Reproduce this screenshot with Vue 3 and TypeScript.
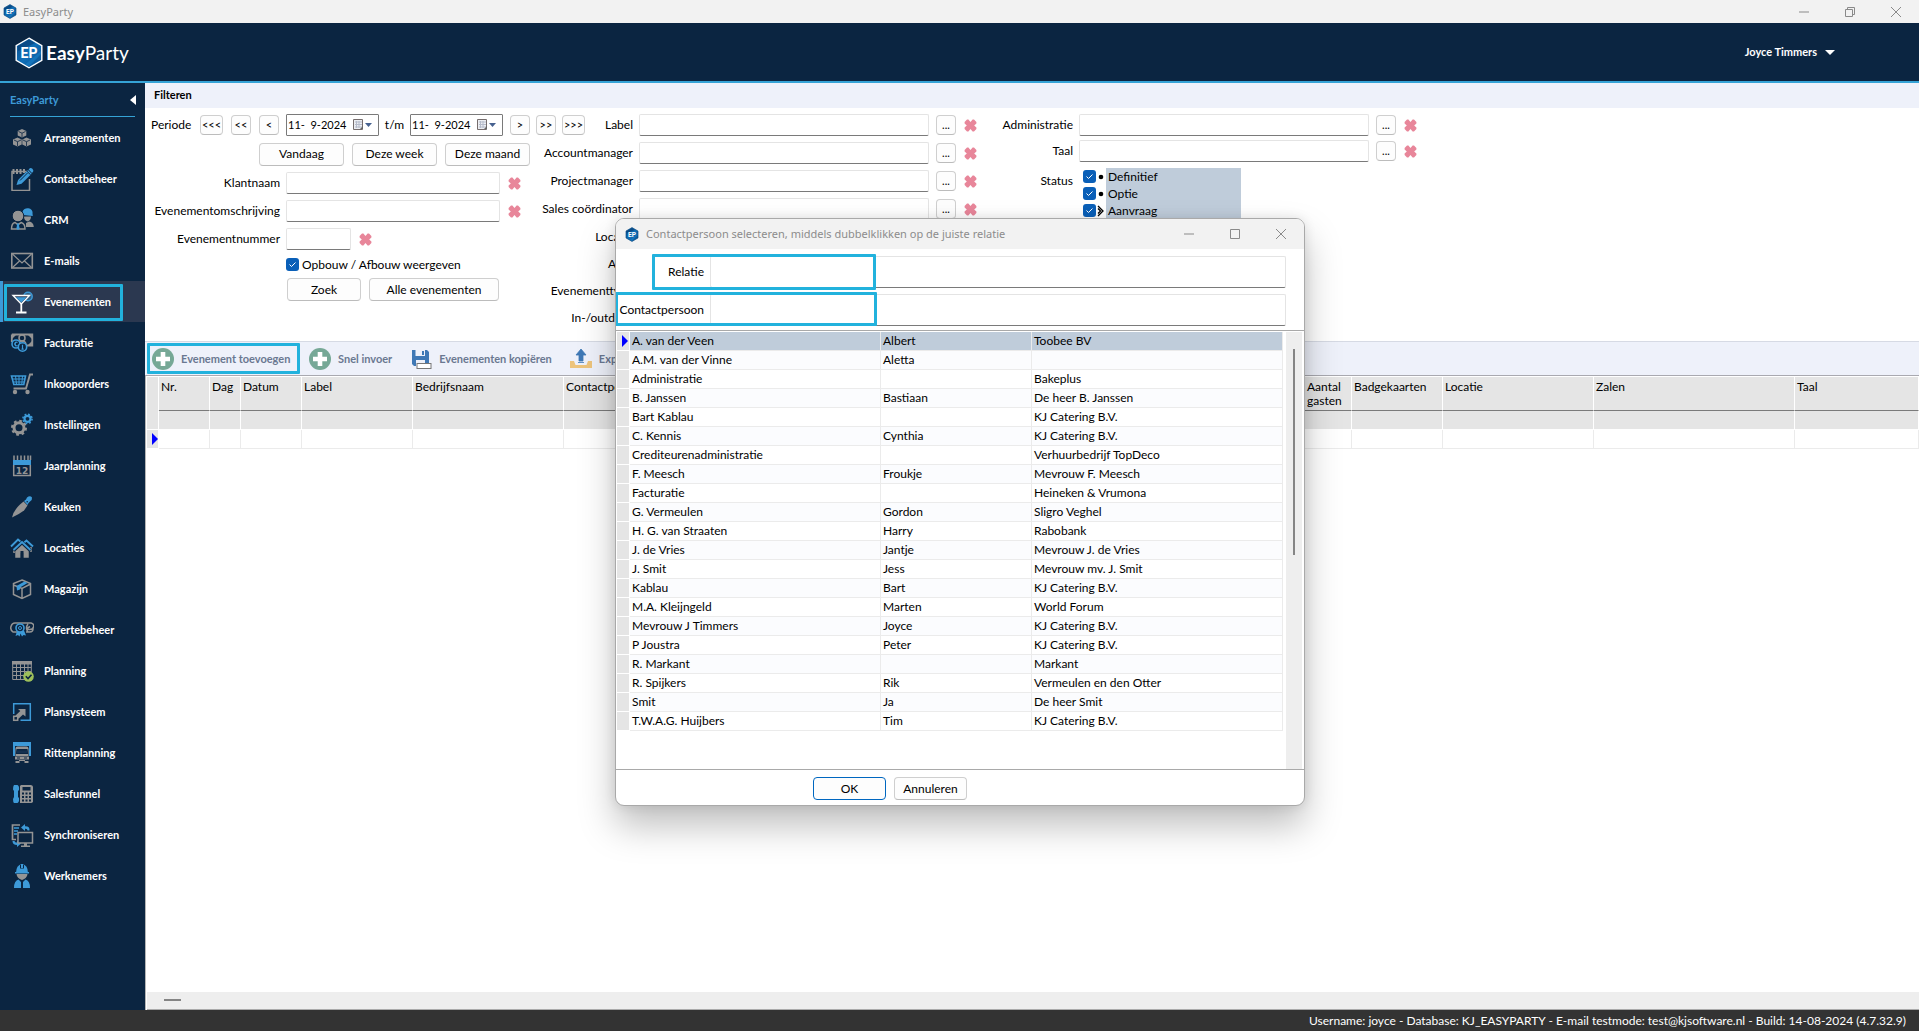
<script setup lang="ts">
import { ref } from 'vue'

interface NavItem { id: string; label: string }
interface Contact { name: string; first: string; company: string }
interface Column { label: string; width?: number }

const nav: NavItem[] = [
  { id: 'cubes', label: 'Arrangementen' },
  { id: 'notes', label: 'Contactbeheer' },
  { id: 'people', label: 'CRM' },
  { id: 'mail', label: 'E-mails' },
  { id: 'glass', label: 'Evenementen' },
  { id: 'money', label: 'Facturatie' },
  { id: 'cart', label: 'Inkooporders' },
  { id: 'gears', label: 'Instellingen' },
  { id: 'year', label: 'Jaarplanning' },
  { id: 'knife', label: 'Keuken' },
  { id: 'houses', label: 'Locaties' },
  { id: 'box', label: 'Magazijn' },
  { id: 'offer', label: 'Offertebeheer' },
  { id: 'plan', label: 'Planning' },
  { id: 'resize', label: 'Plansysteem' },
  { id: 'truck', label: 'Rittenplanning' },
  { id: 'phone', label: 'Salesfunnel' },
  { id: 'sync', label: 'Synchroniseren' },
  { id: 'worker', label: 'Werknemers' },
]
const active = ref('glass')

const before = ['<<<', '<<', '<']
const after = ['>', '>>', '>>>']
const lookups = ['Label', 'Accountmanager', 'Projectmanager', 'Sales coördinator']
const otherLabels = ['Locatie', 'Aard', 'Evenementtype', 'In-/outdoor']
const rightLookups = ['Administratie', 'Taal']
const statuses = ['Definitief', 'Optie', 'Aanvraag']

const columns: Column[] = [
  { label: 'Nr.', width: 51 },
  { label: 'Dag', width: 31 },
  { label: 'Datum', width: 61 },
  { label: 'Label', width: 111 },
  { label: 'Bedrijfsnaam', width: 151 },
  { label: 'Contactpersoon', width: 151 },
  { label: '', width: 200 },
  { label: '', width: 200 },
  { label: '', width: 190 },
  { label: 'Aantal gasten', width: 47 },
  { label: 'Badgekaarten', width: 91 },
  { label: 'Locatie', width: 151 },
  { label: 'Zalen', width: 201 },
  { label: 'Taal' },
]

const contacts: Contact[] = [
  { name: 'A. van der Veen', first: 'Albert', company: 'Toobee BV' },
  { name: 'A.M. van der Vinne', first: 'Aletta', company: '' },
  { name: 'Administratie', first: '', company: 'Bakeplus' },
  { name: 'B. Janssen', first: 'Bastiaan', company: 'De heer B. Janssen' },
  { name: 'Bart Kablau', first: '', company: 'KJ Catering B.V.' },
  { name: 'C. Kennis', first: 'Cynthia', company: 'KJ Catering B.V.' },
  { name: 'Crediteurenadministratie', first: '', company: 'Verhuurbedrijf TopDeco' },
  { name: 'F. Meesch', first: 'Froukje', company: 'Mevrouw F. Meesch' },
  { name: 'Facturatie', first: '', company: 'Heineken & Vrumona' },
  { name: 'G. Vermeulen', first: 'Gordon', company: 'Sligro Veghel' },
  { name: 'H. G. van Straaten', first: 'Harry', company: 'Rabobank' },
  { name: 'J. de Vries', first: 'Jantje', company: 'Mevrouw J. de Vries' },
  { name: 'J. Smit', first: 'Jess', company: 'Mevrouw mv. J. Smit' },
  { name: 'Kablau', first: 'Bart', company: 'KJ Catering B.V.' },
  { name: 'M.A. Kleijngeld', first: 'Marten', company: 'World Forum' },
  { name: 'Mevrouw J Timmers', first: 'Joyce', company: 'KJ Catering B.V.' },
  { name: 'P Joustra', first: 'Peter', company: 'KJ Catering B.V.' },
  { name: 'R. Markant', first: '', company: 'Markant' },
  { name: 'R. Spijkers', first: 'Rik', company: 'Vermeulen en den Otter' },
  { name: 'Smit', first: 'Ja', company: 'De heer Smit' },
  { name: 'T.W.A.G. Huijbers', first: 'Tim', company: 'KJ Catering B.V.' },
]
const selected = ref(0)
</script>

<template>
  <div class="app">
    <svg class="defs" aria-hidden="true">
      <defs>
        <linearGradient id="hexfill" x1="0" y1="0" x2="1" y2="1">
          <stop offset="0" stop-color="#0a4a86" />
          <stop offset="0.5" stop-color="#0f6fb8" />
          <stop offset="1" stop-color="#0b4f8c" />
        </linearGradient>
        <symbol id="hex" viewBox="0 0 28 32">
          <path d="M14 1.2 26.8 8.6V23.4L14 30.8 1.2 23.4V8.6Z" fill="url(#hexfill)" stroke="currentColor" stroke-width="1.4" />
          <path d="M3 9 14 2.6 20 6 3 14Z" fill="#083e74" opacity=".6" />
          <path d="M26 17 14 29.6 10 27.4 26 14Z" fill="#1c86d0" opacity=".5" />
          <text x="14" y="21" text-anchor="middle" font-family="Roboto, sans-serif" font-weight="700" font-size="14" fill="#fff">EP</text>
        </symbol>
        <symbol id="cross" viewBox="0 0 13 13">
          <path d="M3 0.6h1.4L6.5 3 8.6.6H10L12.4 3v1.4L10.2 6.5l2.2 2.1V10L10 12.4H8.6L6.5 10l-2.1 2.4H3L.6 10V8.6L2.8 6.5.6 4.4V3Z" fill="#e8869a" />
        </symbol>
        <symbol id="plus" viewBox="0 0 22 22">
          <circle cx="11" cy="11" r="11" fill="#76a896" />
          <path d="M8.7 4h4.6v4.700h4.700v4.600h-4.700v4.700H8.700v-4.700H4V8.700h4.700Z" fill="#fff" />
        </symbol>
        <symbol id="i-cubes" viewBox="0 0 24 24">
          <g fill="#949494"><path d="m12 3 4.300 2v4.500l-4.300 2-4.300-2V5Z" /><path d="m7.500 11.500 4.200 2v5l-4.200 2-4.500-2v-5Z" /><path d="m16.500 11.500 4.500 2v5l-4.500 2-4.200-2v-5Z" /></g>
          <path d="m8.500 5.500 3.500 1.700 3.500-1.700M12 7.200V11M4 14l3.500 1.700L11 14M7.500 15.700V20M13 14l3.500 1.700L20 14M16.500 15.700V20" fill="none" stroke="#0b2541" stroke-width=".8" />
        </symbol>
        <symbol id="i-notes" viewBox="0 0 24 24">
          <path d="M17 4.500H2v19h17.500V12" fill="none" stroke="#949494" stroke-width="1.500" />
          <path d="M3.500 2v5M7 2v5M10.500 2v5M14 2v4" stroke="#949494" stroke-width="2" />
          <path d="m6.500 18 1.600-5L18 3l3.700 3.700L11.500 16.700Z" fill="#3d9ad8" /><path d="m18.600 2.400 1.200-1.200q1.200-.8 2.600.6t.8 2.800L22 5.900Z" fill="#3d9ad8" />
          <path d="m10 13.500 7.500-7.500M16.500 3.800l4 4" stroke="#0b2541" />
        </symbol>
        <symbol id="i-people" viewBox="0 0 24 24">
          <path d="M12.500 4a5 4.500 0 0 1 10 1.500l.3 2.500-9.800-1Z" fill="#3d9ad8" /><path d="M14 8.500h7q0 4-3.500 5-3.500-1-3.500-5ZM16 15l3-1.500q4.500.5 4.800 5.500H16Z" fill="#949494" />
          <circle cx="8" cy="8" r="5.800" fill="#949494" stroke="#0b2541" />
          <path d="M5 14.500q-3.500.8-3.500 6.500H15q0-5.500-3.800-6.500L8 16.500Z" fill="#0b2541" stroke="#949494" stroke-width="1.500" />
          <path d="m8 15 1.500 1.500L9 17.500l.7 3L8 22l-1.700-1.500.7-3-.5-1Z" fill="#3d9ad8" />
        </symbol>
        <symbol id="i-mail" viewBox="0 0 24 24">
          <rect x="1.800" y="4.500" width="20.500" height="14.500" fill="none" stroke="#949494" stroke-width="1.600" />
          <path d="M2.500 5 12 14l9.500-9M2.500 18.500l7-6.500M21.500 18.500l-7-6.500" fill="none" stroke="#949494" stroke-width="1.200" />
        </symbol>
        <symbol id="i-glass" viewBox="0 0 24 24">
          <circle cx="18" cy="6.500" r="4" fill="#3d9ad8" opacity=".4" /><circle cx="18" cy="6.500" r="4.200" fill="none" stroke="#3d9ad8" stroke-width="1.500" />
          <path d="M3 5.500h16.500L11.300 14Z" fill="#2b3850" stroke="#fff" stroke-width="1.400" /><path d="M5.800 7.200h11L11.300 12.600Z" fill="#3d9ad8" />
          <path d="M11.300 13.500V22M6 22.500h10.500" stroke="#fff" stroke-width="1.800" />
        </symbol>
        <symbol id="i-money" viewBox="0 0 24 24">
          <path d="M1.800 3.500h20.500v11H16M1.800 3.500V11" fill="none" stroke="#949494" stroke-width="1.800" /><path d="M2 4h4L2 8ZM18 4h4v4ZM22 14h-4l4-4Z" fill="#949494" />
          <circle cx="12" cy="7" r="3" fill="none" stroke="#949494" stroke-width="1.500" /><path d="M8 14q0-4 4-4t4 4" fill="none" stroke="#949494" stroke-width="1.500" />
          <circle cx="6" cy="13" r="4" fill="#0b2541" stroke="#3d9ad8" stroke-width="1.600" /><circle cx="12.500" cy="16" r="4.200" fill="#0b2541" stroke="#3d9ad8" stroke-width="1.600" />
          <path d="M7.500 11.500q-2.500-1-2.500 1.500t2.500 1.500M4 13h2M12.500 13.800v4.400M11.500 18.200h2.200" stroke="#3d9ad8" stroke-width="1.200" fill="none" />
        </symbol>
        <symbol id="i-cart" viewBox="0 0 24 24">
          <path d="M1.500 4h14l-1.700 8.500H3.800Z" fill="none" stroke="#3d9ad8" stroke-width="1.600" /><path d="M5.500 4l1 8M9 4v8M12.500 4l-.7 8M2 7h13M3 10h11.500" stroke="#3d9ad8" />
          <path d="M23 2.500h-3L16 16.500H3.500" fill="none" stroke="#949494" stroke-width="1.900" /><circle cx="5" cy="20" r="2.200" fill="#949494" /><circle cx="17.500" cy="20" r="2.200" fill="#949494" />
        </symbol>
        <symbol id="i-gears" viewBox="0 0 24 24">
          <circle cx="9" cy="14.800" r="5" fill="none" stroke="#949494" stroke-width="3" /><circle cx="9" cy="14.800" r="7" fill="none" stroke="#949494" stroke-width="2" stroke-dasharray="2.750 2.750" />
          <circle cx="17.500" cy="5.800" r="3" fill="none" stroke="#3d9ad8" stroke-width="2.200" /><circle cx="17.500" cy="5.800" r="4.600" fill="none" stroke="#3d9ad8" stroke-width="1.500" stroke-dasharray="1.810 1.810" />
        </symbol>
        <symbol id="i-year" viewBox="0 0 24 24">
          <path d="M4 1.500V6M7.500 1.500V6M11 1.500V6M14.500 1.500V6M18 1.500V6M20.500 1.500V6" stroke="#949494" stroke-width="1.500" />
          <path d="M3 6h18v5H3Z" fill="#3d9ad8" /><path d="M3.700 11v10.500h16.600V11" fill="none" stroke="#949494" stroke-width="1.500" />
          <text x="12" y="19.700" text-anchor="middle" font-family="'DejaVu Sans', sans-serif" font-size="9" font-weight="700" fill="#949494">12</text>
        </symbol>
        <symbol id="i-knife" viewBox="0 0 24 24">
          <path d="m13.500 6.500 4 4-3.500 5Q9.500 19 2 22.500q1.500-7 8-13Z" fill="#949494" /><path d="m14 6 2-1.500 1-2q3-2.500 5 0 .5 2-2 4l-1.500 1.500-1 2Z" fill="#3d9ad8" /><circle cx="17.200" cy="6.800" r=".8" fill="#0b2541" />
        </symbol>
        <symbol id="i-houses" viewBox="0 0 24 24">
          <path d="M12 6 4 13v4M21 11v5M6 14v7h4v-5h4v5h4v-7l-6-5Z" fill="#949494" stroke="#949494" stroke-width="1.500" /><path d="M10.500 15h3v7h-3Z" fill="#0b2541" />
          <path d="m1 10.500 7-7 3.500 3M23 10.500l-6.500-6-3.500 3" fill="none" stroke="#3d9ad8" stroke-width="1.900" /><path d="m3.500 14.500 8.500-8 8.500 8" fill="none" stroke="#0b2541" stroke-width="3.500" /><path d="m3.500 14 8.500-8 8.500 8" fill="none" stroke="#3d9ad8" stroke-width="1.900" />
        </symbol>
        <symbol id="i-box" viewBox="0 0 24 24">
          <path d="m12 3 8.500 3.500v11L12 21.500l-8.500-4v-11ZM3.500 8 12 11.500 20.500 7M12 11.500v10" fill="none" stroke="#949494" stroke-width="1.500" />
          <path d="m6.500 9 8-4.500 3 1.500-7.500 4.500v2L7 13.500Z" fill="#3d9ad8" />
        </symbol>
        <symbol id="i-offer" viewBox="0 0 24 24">
          <path d="M7 14H3q-3-2-2-5.500T5 5h16q3.500 1 2.500 4T19 11.500t1-3M16 14h3.500q4 0 3.500-4M18 6q-3 4 0 8" fill="none" stroke="#949494" stroke-width="1.500" />
          <path d="m7 13-1.500 5 2.500-1 1.500 1.500 1-3 1.500 3 1.500-1.500 2.500.5-2-5Z" fill="#3d9ad8" /><circle cx="10" cy="10" r="4" fill="#0b2541" stroke="#3d9ad8" stroke-width="1.600" /><circle cx="10" cy="10" r="1.500" fill="none" stroke="#3d9ad8" />
        </symbol>
        <symbol id="i-plan" viewBox="0 0 24 24">
          <path d="M2.700 3.500h18.600v17H2.700ZM6.500 4v17M10.500 4v17M14.500 4v17M18 4v17M3 8.500h18M3 12.500h18M3 16.500h18" fill="none" stroke="#949494" stroke-width="1" /><path d="M2 2h20v3.500H2Z" fill="#949494" />
          <circle cx="18.500" cy="17.500" r="5.300" fill="#9dc05a" /><path d="m15.800 17.300 2.200 2.200 3.500-3.800" fill="none" stroke="#0b2541" stroke-width="1.600" />
        </symbol>
        <symbol id="i-resize" viewBox="0 0 24 24">
          <path d="M3.700 14V3.700h16.600v16.600H10.500" fill="none" stroke="#3d9ad8" stroke-width="1.500" /><rect x="3.700" y="16.300" width="4" height="4" fill="none" stroke="#949494" stroke-width="1.500" />
          <path d="M8 9h7.500v7.500L13 14.500l-4.500 4.300-3-3.200L10.300 11Z" fill="#949494" />
        </symbol>
        <symbol id="i-truck" viewBox="0 0 24 24">
          <path d="M3 1h18v14h-2V5H5v10H3Z" fill="#3d9ad8" /><path d="M7.500 5.500h9q2 0 2 2V15h-13V7.500q0-2 2-2Z" fill="#949494" /><path d="M6.500 8h11l.7 5H5.800Z" fill="#0b2541" /><path d="M6.500 9.500h11V12h-11Z" fill="#14304f" />
          <path d="M5 15.500h14v3H5ZM5.500 20h4v2h-4ZM14.500 20h4v2h-4ZM9 19h6v1H9Z" fill="#949494" /><path d="M7 17h3M14 17h3" stroke="#0b2541" />
        </symbol>
        <symbol id="i-phone" viewBox="0 0 24 24">
          <path d="M4 3h3.500Q9.500 4 9 8L8 9v6l1 1q.5 4-1.500 5H4q-1-1-1-4l1-2V9L3 7.500Q3 4 4 3Z" fill="#3d9ad8" /><path d="M11 3h10q2 .5 2 2v14.500q-.5 1.500-2 1.500H10V4Z" fill="#949494" />
          <path d="M12.500 5h8v3.500h-8ZM12 10.500h2v2h-2ZM15.500 10.500h2v2h-2ZM19 10.500h2v2h-2ZM12 14h2v2h-2ZM15.500 14h2v2h-2ZM19 14h2v2h-2ZM12 17.500h2v2h-2ZM15.500 17.500h2v2h-2ZM19 17.500h2v2h-2Z" fill="#0b2541" />
        </symbol>
        <symbol id="i-sync" viewBox="0 0 24 24">
          <path d="M10 2H2.500v14.500H6" fill="none" stroke="#949494" stroke-width="1.700" /><path d="M4 5h5M4 8h4M4 11h3" stroke="#3d9ad8" stroke-width="1.500" />
          <path d="M11 4.500 15 1v2.200q5-.2 4.500 4.300h-2q0-2-2.500-1.700V8Z" fill="#3d9ad8" /><path d="M11 20.500 7 24v-2q-4.500 0-4.500-4h2q.2 1.500 2.500 1.500v-2.200Z" fill="#3d9ad8" />
          <rect x="8" y="9.500" width="14.500" height="10.500" fill="#0b2541" stroke="#949494" stroke-width="1.500" /><path d="M14 20h3v2.500h-3ZM11 22.500h9V24h-9Z" fill="#949494" />
        </symbol>
        <symbol id="i-worker" viewBox="0 0 24 24">
          <path d="M6 9Q6 1 12 0q6 1 6 9Z" fill="#3d9ad8" /><path d="M10 1h4v3.500h-4Z" fill="#0b2541" /><path d="M11 0h2v4h-2Z" fill="#3d9ad8" /><path d="M5 8h14v1.500H5Z" fill="#3d9ad8" />
          <path d="M6.500 10h11q-.5 4.500-5.500 6-5-1.500-5.500-6Z" fill="#949494" /><path d="M4 24q0-7.500 4.500-8.500L11 18v6ZM20 24q0-7.500-4.500-8.500L13 18v6Z" fill="#3d9ad8" />
        </symbol>
      </defs>
    </svg>

    <div class="titlebar">
      <svg class="appicon"><use href="#hex" /></svg>
      <span class="caption">EasyParty</span>
      <div class="winbtns">
        <button type="button" aria-label="Minimaliseren"><svg viewBox="0 0 10 10"><path d="M0 5h10" /></svg></button>
        <button type="button" aria-label="Verkleinen"><svg viewBox="0 0 10 10"><path d="M.5 2.500h7v7h-7ZM2.500 2.500V.5h7v7h-2" /></svg></button>
        <button type="button" aria-label="Sluiten"><svg viewBox="0 0 10 10"><path d="m0 0 10 10M10 0 0 10" /></svg></button>
      </div>
    </div>

    <header class="header">
      <svg class="logo"><use href="#hex" /></svg>
      <span class="brand"><b>Easy</b>Party</span>
      <button class="user" type="button">Joyce Timmers<i class="caret"></i></button>
    </header>

    <div class="body">
      <nav class="sidebar">
        <div class="navhead">EasyParty<i class="collapse"></i></div>
        <a v-for="n in nav" :key="n.id" href="#" class="navitem" :class="{ active: active === n.id }" @click.prevent="active = n.id">
          <svg><use :href="'#i-' + n.id" /></svg>{{ n.label }}
        </a>
      </nav>

      <main class="main">
        <h2 class="filterhead">Filteren</h2>
        <form class="filters" @submit.prevent>
          <div class="col left">
            <div class="row">
              <label class="periode" for="from">Periode</label>
              <div class="steps back">
                <button v-for="b in before" :key="b" type="button" class="btn tiny" :class="{ wide: b.length === 3 }">{{ b }}</button>
              </div>
              <span class="date"><input id="from" type="text" value="11-  9-2024"><button type="button" aria-label="Kalender"><svg viewBox="0 0 20 14"><path d="M1.500 1.500h9v10h-9Z" fill="#eceef2" stroke="#756d6d" /><path d="M3 4h7M3 6.500h7M3 9h7M4.500 3v7M7 3v7" stroke="#b6bccb" /><path d="m8 11 3-3v3Z" fill="#666" /><path d="M13 5h7l-3.500 4Z" fill="#46618f" /></svg></button></span>
              <label class="tm" for="until">t/m</label>
              <span class="date"><input id="until" type="text" value="11-  9-2024"><button type="button" aria-label="Kalender"><svg viewBox="0 0 20 14"><path d="M1.500 1.500h9v10h-9Z" fill="#eceef2" stroke="#756d6d" /><path d="M3 4h7M3 6.500h7M3 9h7M4.500 3v7M7 3v7" stroke="#b6bccb" /><path d="m8 11 3-3v3Z" fill="#666" /><path d="M13 5h7l-3.500 4Z" fill="#46618f" /></svg></button></span>
              <div class="steps fwd">
                <button v-for="b in after" :key="b" type="button" class="btn tiny" :class="{ wide: b.length === 3 }">{{ b }}</button>
              </div>
            </div>
            <div class="row quick">
              <button type="button" class="btn">Vandaag</button>
              <button type="button" class="btn">Deze week</button>
              <button type="button" class="btn">Deze maand</button>
            </div>
            <div class="row"><label for="klant">Klantnaam</label><input id="klant" class="field name" type="text"><button type="button" class="clear" aria-label="Wissen"><svg><use href="#cross" /></svg></button></div>
            <div class="row"><label for="omschr">Evenementomschrijving</label><input id="omschr" class="field name" type="text"><button type="button" class="clear" aria-label="Wissen"><svg><use href="#cross" /></svg></button></div>
            <div class="row"><label for="nummer">Evenementnummer</label><input id="nummer" class="field number" type="text"><button type="button" class="clear" aria-label="Wissen"><svg><use href="#cross" /></svg></button></div>
            <div class="row check"><input id="opbouw" type="checkbox" checked><label for="opbouw">Opbouw / Afbouw weergeven</label></div>
            <div class="row search">
              <button type="submit" class="btn zoek">Zoek</button>
              <button type="button" class="btn alle">Alle evenementen</button>
            </div>
          </div>

          <div class="col mid">
            <div v-for="(l, i) in lookups" :key="l" class="row">
              <label :for="'lookup' + i">{{ l }}</label><input :id="'lookup' + i" class="field" type="text"><button type="button" class="btn tiny">...</button><button type="button" class="clear" aria-label="Wissen"><svg><use href="#cross" /></svg></button>
            </div>
            <div v-for="l in otherLabels" :key="l" class="row plain"><span>{{ l }}</span></div>
          </div>

          <div class="col right">
            <div v-for="(l, i) in rightLookups" :key="l" class="row">
              <label :for="'rlookup' + i">{{ l }}</label><input :id="'rlookup' + i" class="field" type="text"><button type="button" class="btn tiny">...</button><button type="button" class="clear" aria-label="Wissen"><svg><use href="#cross" /></svg></button>
            </div>
            <div class="status">
              <span class="statuslabel">Status</span>
              <ul>
                <li v-for="(s, i) in statuses" :key="s">
                  <input :id="'status' + i" type="checkbox" checked>
                  <svg class="mark" viewBox="0 0 8 12"><path v-if="i === 2" d="M1 1l5 5-5 5M1 3.500 3.500 6 1 8.500" fill="none" stroke="#000" stroke-width="1.300" /><circle v-else cx="4" cy="6" r="2.300" /></svg>
                  <label :for="'status' + i">{{ s }}</label>
                </li>
              </ul>
            </div>
          </div>
        </form>

        <div class="toolbar">
          <button type="button" class="tool marked"><svg><use href="#plus" /></svg>Evenement toevoegen</button>
          <button type="button" class="tool"><svg><use href="#plus" /></svg>Snel invoer</button>
          <button type="button" class="tool"><svg viewBox="0 0 22 22"><path d="M2 2h15l2 2v14H4l-2-2Z" fill="#3f78b5" /><path d="M5.500 2h9.500v6H5.500ZM6 12h9v6H6Z" fill="#eef1fa" /><path d="M12 3h2v4h-2Z" fill="#3f78b5" /><rect x="7" y="15.500" width="14" height="5" fill="#fff" stroke="#777" /></svg>Evenementen kopiëren</button>
          <button type="button" class="tool"><svg viewBox="0 0 22 22"><path d="M0 13h4l1.500 4h11L18 13h4v7H0Z" fill="#edc47c" /><path d="M11 1 16 7h-3v6H9V7H6ZM8 14.500h6" fill="#3f78b5" stroke="#3f78b5" stroke-width=".8" /></svg>Exporteren</button>
        </div>

        <div class="gridarea">
          <table class="events">
            <colgroup>
              <col class="ind">
              <col v-for="(c, i) in columns" :key="i" :style="c.width ? { width: c.width + 'px' } : {}">
            </colgroup>
            <thead>
              <tr class="heads"><th></th><th v-for="(c, i) in columns" :key="i">{{ c.label }}</th></tr>
              <tr class="filterrow"><td></td><td v-for="(c, i) in columns" :key="i"></td></tr>
            </thead>
            <tbody>
              <tr><td class="cur"><i class="arrow"></i></td><td v-for="(c, i) in columns" :key="i"></td></tr>
            </tbody>
          </table>
          <div class="hscroll"><i></i></div>
        </div>
      </main>
    </div>

    <footer class="statusbar">Username: joyce - Database: KJ_EASYPARTY - E-mail testmode: test@kjsoftware.nl - Build: 14-08-2024 (4.7.32.9)</footer>

    <section class="dialog" role="dialog" aria-labelledby="dlgtitle">
      <div class="dlgbar">
        <svg class="appicon"><use href="#hex" /></svg>
        <span id="dlgtitle" class="caption">Contactpersoon selecteren, middels dubbelklikken op de juiste relatie</span>
        <div class="winbtns">
          <button type="button" aria-label="Minimaliseren"><svg viewBox="0 0 10 10"><path d="M0 5h10" /></svg></button>
          <button type="button" aria-label="Maximaliseren"><svg viewBox="0 0 10 10"><path d="M.5.5h9v9h-9Z" /></svg></button>
          <button type="button" aria-label="Sluiten"><svg viewBox="0 0 10 10"><path d="m0 0 10 10M10 0 0 10" /></svg></button>
        </div>
      </div>
      <div class="dlgform">
        <div class="dlgrow"><label for="relatie">Relatie</label><input id="relatie" class="field" type="text"><i class="ring short"></i></div>
        <div class="dlgrow"><label for="contact">Contactpersoon</label><input id="contact" class="field" type="text"><i class="ring"></i></div>
      </div>
      <div class="dlggrid">
        <table class="contacts">
          <colgroup><col class="ind"><col class="c1"><col class="c2"><col></colgroup>
          <tbody>
            <tr v-for="(c, i) in contacts" :key="c.name" :class="{ sel: i === selected }" @click="selected = i">
              <td><i v-if="i === selected" class="arrow"></i></td><td>{{ c.name }}</td><td>{{ c.first }}</td><td>{{ c.company }}</td>
            </tr>
          </tbody>
        </table>
        <div class="vscroll"><i></i></div>
      </div>
      <div class="dlgfoot">
        <button type="button" class="btn ok">OK</button>
        <button type="button" class="btn">Annuleren</button>
      </div>
    </section>
  </div>
</template>

<style>
body { margin: 0; background: #fff; }
</style>

<style scoped>
* { box-sizing: border-box; }
.app { position: relative; display: flex; flex-direction: column; min-height: 100vh; overflow: hidden; font: 12px/14px Lato, "Noto Sans", sans-serif; color: #000; }
.defs { position: absolute; width: 0; height: 0; }
button { font: inherit; color: inherit; background: none; border: 0; padding: 0; margin: 0; }
input { font: inherit; margin: 0; }

.titlebar { display: flex; align-items: center; height: 23px; padding-left: 3px; background: #f2f2f2; }
.appicon { width: 14px; height: 15px; color: #0b4a80; flex: none; }
.caption { font-family: "Noto Sans", sans-serif; font-size: 11px; color: #8c8c8c; }
.titlebar .caption { margin-left: 6px; }
.winbtns { display: flex; margin-left: auto; }
.winbtns button { width: 46px; height: 20px; display: grid; place-items: center; }
.winbtns svg { width: 10px; height: 10px; fill: none; stroke: #8a8a8a; }

.header { display: flex; align-items: center; height: 60px; padding-left: 14px; background: #0b2541; border-bottom: 2px solid #35a3d6; color: #fff; }
.logo { width: 30px; height: 32px; margin-top: 2px; }
.brand { font-size: 19px; line-height: 24px; margin: 2px 0 0 2px; }
.user { display: flex; align-items: center; gap: 8px; margin: 0 84px 0 auto; font-size: 11px; font-weight: 700; }
.caret { border: 5px solid transparent; border-top-color: #fff; border-bottom: 0; }

.body { display: flex; flex: 1; }
.sidebar { width: 145px; flex: none; background: #0b2541; color: #fff; font-size: 11px; font-weight: 700; }
.navhead { display: flex; justify-content: space-between; align-items: center; height: 34px; margin: 0 10px; border-bottom: 1px solid #35a3d6; color: #3d9ad8; }
.collapse { border: 5px solid transparent; border-right: 6px solid #fff; border-left: 0; margin-right: -1px; }
.navitem { position: relative; display: flex; align-items: center; gap: 10px; height: 41px; padding-left: 10px; color: #fff; text-decoration: none; }
.navitem svg { width: 24px; height: 24px; }
.navitem.active { background: #2b3850; box-shadow: inset 3px 0 #3d9ad8; }
.navitem.active::after { content: ""; position: absolute; inset: 3px 22px 1px 4px; border: 3px solid #22b2dd; border-radius: 1px; }

.main { flex: 1; min-width: 0; display: flex; flex-direction: column; background: #fff; }
.filterhead { margin: 0; height: 25px; padding: 5px 9px; background: #eef1fa; font-size: 11px; line-height: 14px; }
.filters { display: flex; height: 233px; padding-top: 3px; }
.col { flex: none; }
.row { display: flex; align-items: center; height: 28px; white-space: nowrap; }
.left { width: 385px; }
.left .row > label { width: 135px; margin-right: 6px; text-align: right; flex: none; }
.left .row > .periode { width: 55px; margin: 0; padding-left: 6px; text-align: left; }
.left .row > .tm { width: 31px; margin: 0; text-align: center; }
.steps { display: flex; gap: 8px; }
.steps.back { margin-right: 7px; }
.steps.fwd { margin-left: 7px; gap: 6px; }
.btn { height: 23px; flex: none; background: #fdfdfd; border: 1px solid #cfcfcf; border-bottom-color: #bcbcbc; border-radius: 4px; text-align: center; }
.btn.tiny { width: 20px; height: 20px; font-size: 11px; }
.btn.wide { width: 23px; }
.date { display: flex; align-items: center; width: 93px; height: 22px; flex: none; border: 1px solid #7a7a7a; border-radius: 1px; }
.date input { width: 65px; padding: 0 1px; border: 0; outline: 0; background: none; white-space: pre; font-size: 11px; }
.date button, .date svg { width: 20px; height: 14px; display: block; }
.left .quick { height: 30px; gap: 8px; padding-left: 114px; }
.quick .btn { width: 85px; }
.field { height: 22px; border: 1px solid #e4e4e4; border-bottom-color: #7a7a7a; border-radius: 2px; background: #fff; outline: 0; }
.name { width: 214px; }
.number { width: 65px; }
.clear { width: 13px; height: 13px; margin-left: 8px; flex: none; }
.clear svg { display: block; width: 13px; height: 13px; }
.left .check { height: 23px; padding-left: 141px; }
.left .check > label { width: auto; margin: 0 0 0 3px; }
input[type="checkbox"] { appearance: none; width: 13px; height: 13px; flex: none; border-radius: 3px; background: #0a5fb8 url("data:image/svg+xml,%3Csvg xmlns='http://www.w3.org/2000/svg' viewBox='0 0 13 13'%3E%3Cpath d='m3.500 6.500 2 2 4-4' fill='none' stroke='%23fff'/%3E%3C/svg%3E"); }
.left .search { height: 27px; padding-left: 142px; gap: 8px; }
.zoek { width: 74px; }
.alle { width: 130px; }
.mid label, .plain span { width: 103px; margin-right: 6px; text-align: right; flex: none; }
.mid .field, .right .field { width: 290px; margin-right: 7px; }
.mid .plain { height: 27px; }
.right label { flex: none; }
.right .row { height: 26px; }
.right .row:first-child { margin-top: 1px; }
.right .row > label, .statuslabel { width: 96px; margin-right: 6px; text-align: right; flex: none; }
.status { display: flex; padding-top: 4px; }
.statuslabel { padding-top: 6px; }
.status ul { margin: 0; padding: 0 0 0 4px; list-style: none; }
.status li { display: flex; align-items: center; height: 17px; }
.mark { width: 8px; height: 12px; margin: 0 1px; }
.status li label { width: 135px; padding: 2px 2px 1px; background: #bfccda; }

.toolbar { display: flex; align-items: center; height: 35px; padding: 0 2px; gap: 9px; background: #eef1fa; border-top: 1px solid #d6dae4; border-bottom: 1px solid #a9a9b0; color: #6a7891; font-size: 11px; font-weight: 700; }
.tool { display: flex; align-items: center; gap: 7px; height: 31px; padding-right: 9px; white-space: nowrap; }
.tool svg { width: 22px; height: 22px; }
.tool.marked { width: 153px; padding: 0 0 0 2px; border: 3px solid #22b2dd; border-radius: 1px; }

.gridarea { flex: 1; display: flex; flex-direction: column; border-left: 1px solid #b5b5b5; padding: 1px 0 0 1px; }
.events { width: 100%; table-layout: fixed; border-collapse: separate; border-spacing: 0; }
.ind { width: 12px; }
.events th, .events td { padding: 0 2px; border-right: 1px solid #fff; text-align: left; font-weight: 400; }
.events th { height: 34px; padding-top: 3px; vertical-align: top; background: #e5e5e5; border-bottom: 1px solid #7a7a7a; }
.events th:first-child { border-bottom-color: #e5e5e5; }
.filterrow td { height: 19px; background: #e5e5e5; border-bottom: 1px solid #fff; }
.events tbody td { height: 19px; border-right-color: #ebebeb; border-bottom: 1px solid #ebebeb; }
.events .cur, .contacts td:first-child { padding: 0; background: #e5e5e5; border-color: #fff; }
.arrow { display: block; width: 0; border: 6px solid transparent; border-left-color: #00f; border-right: 0; margin-left: 5px; }
.hscroll { height: 18px; margin-top: auto; padding: 7px 0 0 17px; background: #eee; border-bottom: 1px solid #aaa; }
.hscroll i { display: block; width: 17px; height: 2px; background: #858585; }

.statusbar { height: 21px; padding: 2px 13px; background: #333; color: #fff; font-size: 12px; line-height: 17px; text-align: right; }

.dialog { position: absolute; left: 615px; top: 218px; width: 690px; background: #fff; border: 1px solid #a9a9a9; border-radius: 9px; overflow: hidden; box-shadow: 0 20px 36px rgba(0, 0, 0, .25), 0 0 12px rgba(0, 0, 0, .1); }
.dlgbar { display: flex; align-items: center; height: 30px; padding-left: 9px; background: #f2f2f2; }
.dlgbar .caption { margin-left: 7px; white-space: nowrap; }
.dlgform { padding: 4px 0 1px; }
.dlgrow { position: relative; display: flex; align-items: center; height: 38px; padding-right: 18px; }
.dlgrow label { width: 88px; margin-right: 6px; text-align: right; }
.dlgrow .field { flex: 1; height: 32px; }
.ring { position: absolute; left: -1px; top: 1px; width: 262px; height: 34px; border: 3px solid #22b2dd; border-radius: 1px; pointer-events: none; }
.ring.short { left: 36px; width: 224px; height: 36px; }
.dlggrid { display: flex; justify-content: space-between; height: 440px; padding: 1px 2px 0 1px; border: 1px solid #a9a9a9; border-width: 1px 0; }
.contacts { width: 666px; height: 399px; table-layout: fixed; border-collapse: separate; border-spacing: 0; }
.c1 { width: 251px; }
.c2 { width: 151px; }
.contacts td { height: 19px; padding: 0 2px; border: solid #ebebeb; border-width: 0 1px 1px 0; line-height: 14px; white-space: nowrap; }
.contacts .ind { width: 13px; }
.contacts tr:nth-child(even) td:not(:first-child) { background: #fbfcfe; }
.contacts .sel td:not(:first-child) { background: #bfccda; }
.vscroll { width: 16px; height: 437px; padding: 17px 0 0 7px; background: #eee; }
.vscroll i { display: block; width: 2px; height: 206px; background: #858585; }
.dlgfoot { display: flex; gap: 8px; padding: 7px 0 5px 197px; }
.dlgfoot .btn { width: 73px; }
.dlgfoot .ok { border-color: #0067c0; }
</style>
